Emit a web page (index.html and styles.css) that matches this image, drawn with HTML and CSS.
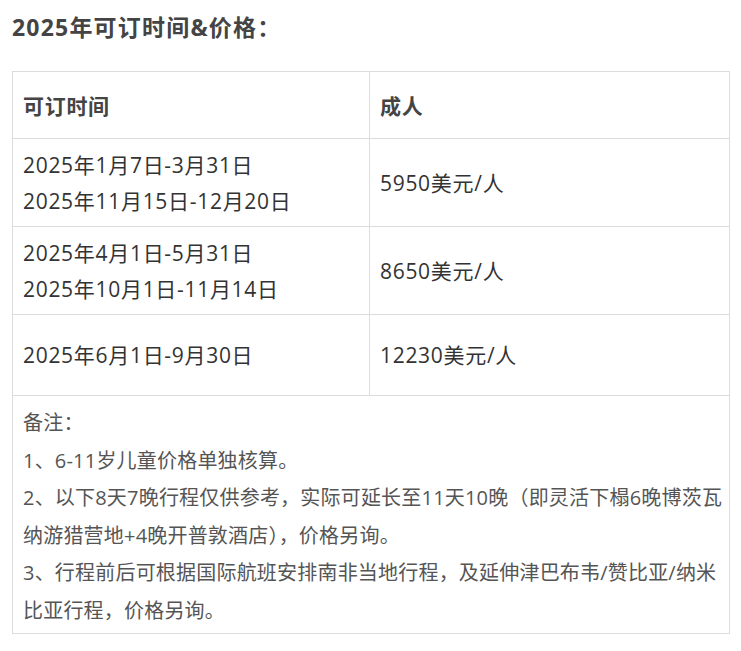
FILE: index.html
```html
<!DOCTYPE html>
<html lang="zh-CN">
<head>
<meta charset="utf-8">
<title>2025年可订时间&amp;价格</title>
<link rel="stylesheet" href="styles.css">
</head>
<body>
<main class="page">
  <h2 class="title">2025年可订时间&amp;价格：</h2>
  <table class="price-table">
    <colgroup>
      <col class="col-date">
      <col class="col-price">
    </colgroup>
    <thead>
      <tr class="row-head">
        <th>可订时间</th>
        <th>成人</th>
      </tr>
    </thead>
    <tbody>
      <tr class="row-two">
        <td>2025年1月7日-3月31日<br>2025年11月15日-12月20日</td>
        <td>5950美元/人</td>
      </tr>
      <tr class="row-two">
        <td>2025年4月1日-5月31日<br>2025年10月1日-11月14日</td>
        <td>8650美元/人</td>
      </tr>
      <tr class="row-one">
        <td>2025年6月1日-9月30日</td>
        <td>12230美元/人</td>
      </tr>
      <tr class="row-notes">
        <td colspan="2">
          <p>备注：</p>
          <p>1、6-11岁儿童价格单独核算。</p>
          <p>2、以下8天7晚行程仅供参考，实际可延长至11天10晚（即灵活下榻6晚博茨瓦纳游猎营地+4晚开普敦酒店），价格另询。</p>
          <p>3、行程前后可根据国际航班安排南非当地行程，及延伸津巴布韦/赞比亚/纳米比亚行程，价格另询。</p>
        </td>
      </tr>
    </tbody>
  </table>
</main>
</body>
</html>
```

FILE: styles.css
```css
html, body {
  margin: 0;
  padding: 0;
  background: #ffffff;
}

.page {
  padding: 12px 0 0 12px;
  width: 717px;
  font-family: "Open Sans", "Noto Sans CJK SC", sans-serif;
  color: #333333;
}

.title {
  margin: 0 0 29px 0;
  font-size: 23px;
  line-height: 30px;
  font-weight: 700;
  letter-spacing: 1.2px;
  color: #444444;
}

.price-table {
  width: 717px;
  border-collapse: collapse;
  table-layout: fixed;
  border: 1px solid #dcdcdc;
}

.col-date { width: 357px; }
.col-price { width: 360px; }

.price-table th,
.price-table td {
  border: 1px solid #dcdcdc;
  text-align: left;
  vertical-align: middle;
  font-size: 21px;
  line-height: 36px;
  letter-spacing: 0.7px;
  padding: 0 10px;
  color: #333333;
  font-weight: 400;
}

.price-table th {
  font-weight: 700;
  color: #444444;
}

.row-head th {
  padding-top: 16px;
  padding-bottom: 14px;
}

.row-two td {
  padding-top: 8px;
  padding-bottom: 7px;
}

.row-one td {
  padding-top: 22px;
  padding-bottom: 22px;
}

.row-notes td {
  padding: 8px 3px 4px 10px;
  font-size: 20px;
  letter-spacing: 0.2px;
  color: #555555;
}

.row-notes p {
  margin: 0;
  line-height: 37.5px;
}
```
